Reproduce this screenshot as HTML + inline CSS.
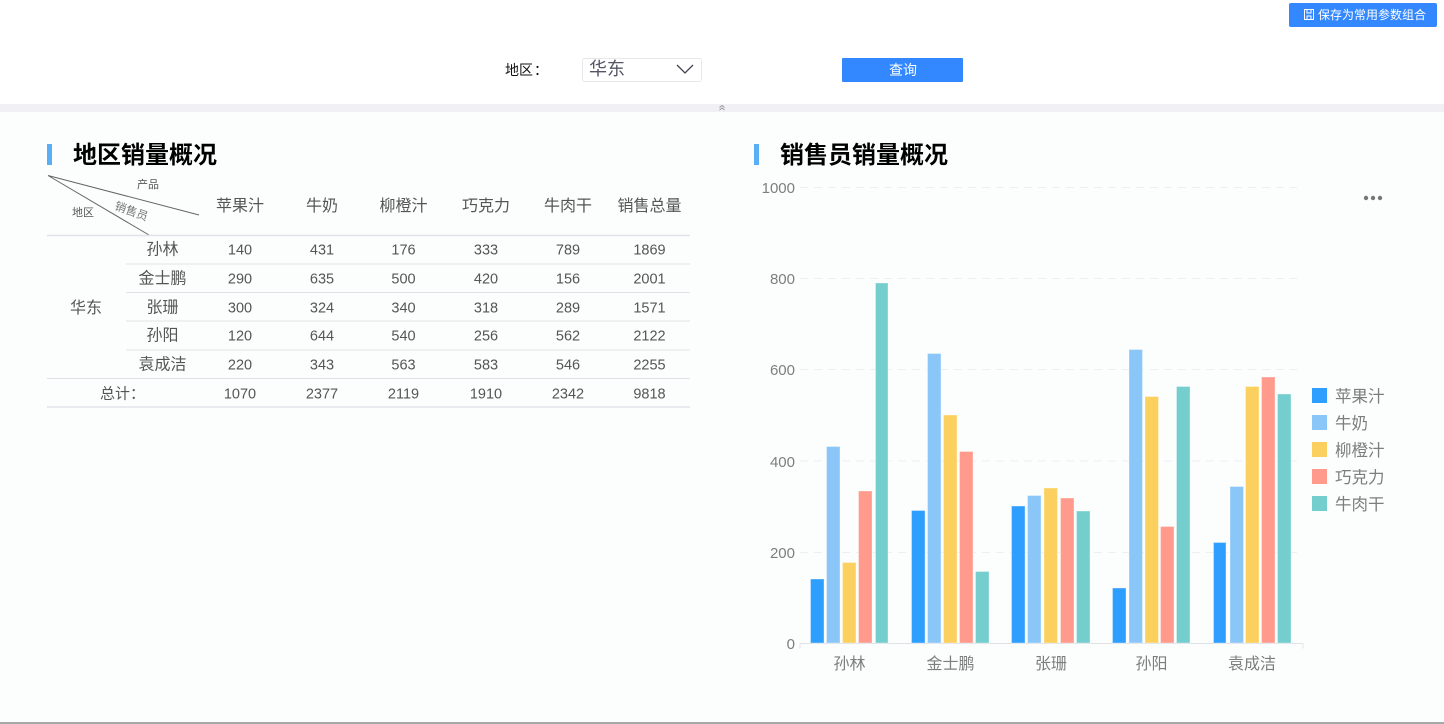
<!DOCTYPE html>
<html lang="zh"><head><meta charset="utf-8"><title>销量概况</title>
<style>
html,body{margin:0;padding:0;width:1444px;height:724px;overflow:hidden;background:#fff}
svg{display:block}
text{font-family:"Liberation Sans","Noto Sans CJK SC",sans-serif}
.h{font-size:16px;fill:#555;text-anchor:middle}
.c{font-size:14.500px;fill:#555;text-anchor:middle}
.a{font-size:15px;fill:#7d7d7d;text-anchor:end}
.x{font-size:16px;fill:#7d7d7d;text-anchor:middle}
.l{font-size:16.500px;fill:#7d7d7d}
.t{font-size:24px;font-weight:bold;fill:#000}
.g{stroke:#edeff4;stroke-width:1;stroke-dasharray:8 6}
.r{stroke:#dfe2e6;stroke-width:1}
.bar rect{stroke-width:1;stroke-opacity:.35;stroke:#fff}
</style></head><body>
<svg width="1444" height="724" viewBox="0 0 1444 724" xmlns="http://www.w3.org/2000/svg">
<rect width="1444" height="724" fill="#fff"/>
<rect y="112" width="1444" height="610" fill="#fcfefe"/>
<rect y="104" width="1444" height="8" fill="#f1f1f5"/>
<path d="M719.500 107.500l2.500-2 2.500 2M719.500 110l2.500-2 2.500 2" fill="none" stroke="#999" stroke-width="1"/>
<rect y="722" width="1444" height="2" fill="#a8a8a8"/>

<rect x="1289" y="3" width="148" height="24" rx="2" fill="#3388ff"/>
<g fill="none" stroke="#fff" stroke-width="1"><path d="M1304.500 9.500h9v10h-9zM1307 9.500v3.500h4v-3.500M1307 19.500v-3.500h4v3.500"/></g>
<text x="1318" y="19" font-size="12" fill="#fff">保存为常用参数组合</text>

<text x="505" y="75" font-size="14" fill="#111">地区</text><text x="534" y="75" font-size="14" fill="#111">：</text>
<rect x="582.500" y="58.500" width="119" height="23" rx="2" fill="#fff" stroke="#e6e8ec"/>
<text x="589" y="75" font-size="18" fill="#556">华东</text>
<path d="M677 65l8 8 8-8" fill="none" stroke="#445" stroke-width="1.300"/>
<rect x="842" y="58" width="121" height="24" rx="1" fill="#3388ff"/>
<text x="903" y="75" font-size="14" fill="#fff" text-anchor="middle">查询</text>

<rect x="47" y="144" width="5" height="21" fill="#5aaef5"/>
<text class="t" x="73" y="163">地区销量概况</text>
<rect x="754" y="144" width="5" height="21" fill="#5aaef5"/>
<text class="t" x="780" y="163">销售员销量概况</text>

<path d="M48 175.500L199 215M48 175.500L149 235" stroke="#666" stroke-width="1" fill="none"/>
<text x="148" y="188" font-size="11" fill="#555" text-anchor="middle">产品</text>
<text x="83" y="216" font-size="11" fill="#555" text-anchor="middle">地区</text>
<text x="131.500" y="215" font-size="11.500" fill="#777" text-anchor="middle" transform="rotate(20 131 211)">销售员</text>

<g class="h"><text x="240" y="211">苹果汁</text><text x="322" y="211">牛奶</text><text x="403.500" y="211">柳橙汁</text><text x="486" y="211">巧克力</text><text x="568" y="211">牛肉干</text><text x="649.500" y="211">销售总量</text></g>

<g class="r"><path d="M47 235.500H690" stroke="#e0e3e8" stroke-width="1.500"/><path d="M126 264H690M126 292.500H690M126 321H690M126 350H690" /><path d="M47 378.500H690"/><path d="M47 407H690" stroke="#e0e3e8" stroke-width="1.500"/></g>

<text class="h" x="86" y="313">华东</text>
<g class="h"><text x="162.500" y="254.500">孙林</text><text x="162.500" y="283.500">金士鹏</text><text x="162.500" y="312.500">张珊</text><text x="162.500" y="340.500">孙阳</text><text x="162.500" y="369.500">袁成洁</text></g>
<text x="100" y="398.500" font-size="15" fill="#555">总计</text><text x="130" y="398.500" font-size="15" fill="#555">：</text>

<g class="c">
<text x="240" y="254.500">140</text><text x="322" y="254.500">431</text><text x="403.500" y="254.500">176</text><text x="486" y="254.500">333</text><text x="568" y="254.500">789</text><text x="649.500" y="254.500">1869</text>
<text x="240" y="283.500">290</text><text x="322" y="283.500">635</text><text x="403.500" y="283.500">500</text><text x="486" y="283.500">420</text><text x="568" y="283.500">156</text><text x="649.500" y="283.500">2001</text>
<text x="240" y="312.500">300</text><text x="322" y="312.500">324</text><text x="403.500" y="312.500">340</text><text x="486" y="312.500">318</text><text x="568" y="312.500">289</text><text x="649.500" y="312.500">1571</text>
<text x="240" y="340.500">120</text><text x="322" y="340.500">644</text><text x="403.500" y="340.500">540</text><text x="486" y="340.500">256</text><text x="568" y="340.500">562</text><text x="649.500" y="340.500">2122</text>
<text x="240" y="369.500">220</text><text x="322" y="369.500">343</text><text x="403.500" y="369.500">563</text><text x="486" y="369.500">583</text><text x="568" y="369.500">546</text><text x="649.500" y="369.500">2255</text>
<text x="240" y="398.500">1070</text><text x="322" y="398.500">2377</text><text x="403.500" y="398.500">2119</text><text x="486" y="398.500">1910</text><text x="568" y="398.500">2342</text><text x="649.500" y="398.500">9818</text>
</g>

<g class="g"><path d="M800 187.500H1297M800 278.500H1297M800 369.500H1297M800 461H1297M800 552.500H1297"/></g>
<path d="M800 643.500H1303M800 643.500v5M1303 643.500v5" stroke="#dfe3e8" fill="none"/>
<g class="a"><text x="795" y="193">1000</text><text x="795" y="284">800</text><text x="795" y="375">600</text><text x="795" y="467">400</text><text x="795" y="558">200</text><text x="795" y="649">0</text></g>
<g fill="#777"><circle cx="1366" cy="198" r="2.200"/><circle cx="1373" cy="198" r="2.200"/><circle cx="1380" cy="198" r="2.200"/></g>

<g class="bar">
<g fill="#2e9fff"><rect x="810.500" y="579" width="13.500" height="64"/><rect x="911.500" y="510.500" width="13.500" height="132.500"/><rect x="1011.500" y="506" width="13.500" height="137"/><rect x="1112.500" y="588" width="13.500" height="55"/><rect x="1213.500" y="542.500" width="12.500" height="100.500"/></g>
<g fill="#8ac7f8"><rect x="826.500" y="446.500" width="13.500" height="196.500"/><rect x="927.500" y="353.500" width="13.500" height="289.500"/><rect x="1027.500" y="495.500" width="13.500" height="147.500"/><rect x="1129" y="349.500" width="13.500" height="293.500"/><rect x="1230" y="486.500" width="13.500" height="156.500"/></g>
<g fill="#fcd05e"><rect x="842.500" y="562.500" width="13.500" height="80.500"/><rect x="943.500" y="415" width="13.500" height="228"/><rect x="1044" y="488" width="13.500" height="155"/><rect x="1145" y="396.500" width="13.500" height="246.500"/><rect x="1245.500" y="386.500" width="13.500" height="256.500"/></g>
<g fill="#ff9a8c"><rect x="858.500" y="491" width="13.500" height="152"/><rect x="959.500" y="451.500" width="13.500" height="191.500"/><rect x="1060.500" y="498" width="13.500" height="145"/><rect x="1160.500" y="526.500" width="13.500" height="116.500"/><rect x="1261.500" y="377" width="13.500" height="266"/></g>
<g fill="#74cece"><rect x="875.500" y="283" width="12.500" height="360"/><rect x="975.500" y="571.500" width="13.500" height="71.500"/><rect x="1076.500" y="511" width="13.500" height="132"/><rect x="1176.500" y="386.500" width="13.500" height="256.500"/><rect x="1277.500" y="394" width="13.500" height="249"/></g>
</g>

<g class="x"><text x="849.500" y="669">孙林</text><text x="950.500" y="669">金士鹏</text><text x="1051" y="669">张珊</text><text x="1151.500" y="669">孙阳</text><text x="1252" y="669">袁成洁</text></g>

<rect x="1312" y="388" width="15" height="15" fill="#2e9fff"/>
<rect x="1312" y="415" width="15" height="15" fill="#8ac7f8"/>
<rect x="1312" y="442" width="15" height="15" fill="#fcd05e"/>
<rect x="1312" y="469" width="15" height="15" fill="#ff9a8c"/>
<rect x="1312" y="496" width="15" height="15" fill="#74cece"/>
<g class="l"><text x="1335" y="402">苹果汁</text><text x="1335" y="429">牛奶</text><text x="1335" y="456">柳橙汁</text><text x="1335" y="483">巧克力</text><text x="1335" y="510">牛肉干</text></g>
</svg>
</body></html>
